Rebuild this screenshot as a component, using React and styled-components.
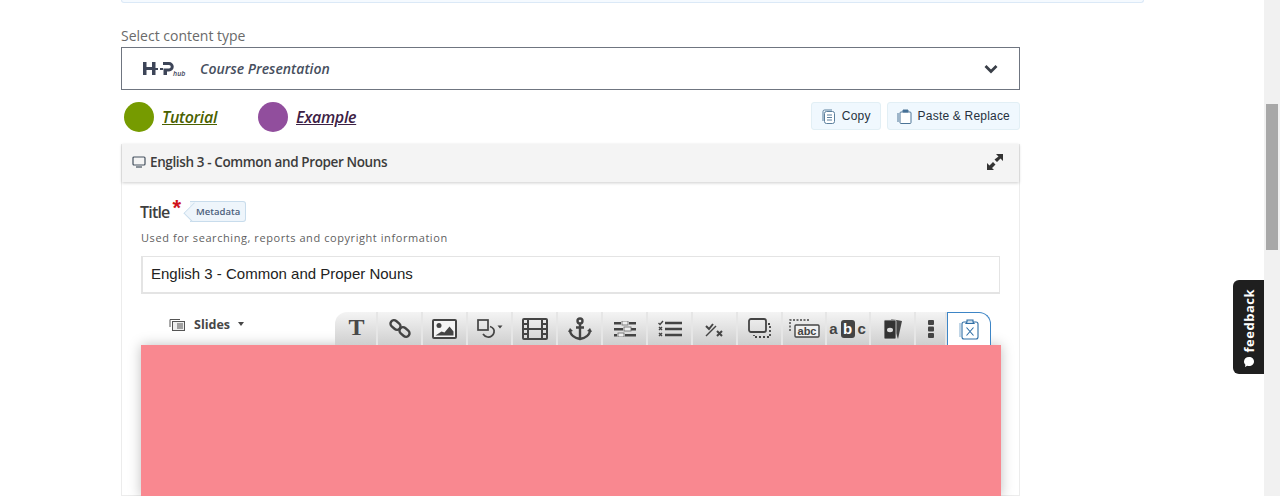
import React from "react";
import styled, { createGlobalStyle } from "styled-components";

const Global = createGlobalStyle`
  html, body { margin: 0; padding: 0; height: 496px; overflow: hidden; background: #fff; }
  * { box-sizing: border-box; }
`;

const Page = styled.div`
  position: relative;
  display: flex;
  width: 1280px;
  height: 496px;
  overflow: hidden;
  font-family: "Open Sans", sans-serif;
`;

const Main = styled.main`
  flex: 1;
  padding-left: 121px;
`;

const Notice = styled.div`
  width: 1023px;
  height: 3px;
  background: #f5faff;
  border: 1px solid #dbe9f7;
  border-top: 0;
  border-radius: 0 0 5px 5px;
`;

const Form = styled.div`
  width: 899px;
`;

const FieldLabel = styled.div`
  margin-top: 23px;
  height: 21px;
  font-size: 14px;
  line-height: 20px;
  color: #6a6a6a;
`;

const Select = styled.div`
  display: flex;
  align-items: center;
  height: 43px;
  padding: 0 21px;
  border: 1px solid #6f7580;
  background: #fff;
`;

const HubLogo = styled.span`
  display: flex;
  align-items: center;
  width: 57px;
  height: 18px;
`;

const SelectName = styled.span`
  flex: 1;
  font-size: 14px;
  font-weight: 600;
  font-style: italic;
  color: #474f5e;
`;

const ActionRow = styled.div`
  display: flex;
  align-items: center;
  height: 54px;
  padding-left: 3px;
`;

const Dot = styled.span`
  width: 30px;
  height: 30px;
  border-radius: 50%;
  background: ${(p) => p.$color};
`;

const HelpLink = styled.a`
  margin: 0 41px 0 8px;
  font-size: 16px;
  font-weight: 600;
  font-style: italic;
  letter-spacing: -0.3px;
  text-decoration: underline;
  color: ${(p) => p.$color};
`;

const Spacer = styled.span`
  flex: 1;
`;

const ClipButton = styled.button`
  display: flex;
  align-items: center;
  gap: 6px;
  height: 28px;
  margin: 0 0 2px 6px;
  padding: 0 9px;
  border: 1px solid #e2eff5;
  border-radius: 3px;
  background: #f0f8fe;
  font-family: "Liberation Sans", sans-serif;
  font-size: 12px;
  letter-spacing: 0.2px;
  color: #26313d;
`;

const Panel = styled.section`
  height: 352px;
  border: 1px solid #ececec;
  border-top: 0;
`;

const PanelHead = styled.header`
  display: flex;
  align-items: center;
  height: 38px;
  padding: 0 15px 2px 10px;
  background: #f4f4f4;
  box-shadow: 0 1px 3px rgba(0, 0, 0, 0.2);
  font-size: 13.500px;
  font-weight: 600;
  letter-spacing: -0.38px;
  color: #3c3c3c;
  svg:first-child { margin-right: 4px; }
  span { flex: 1; }
`;

const PanelBody = styled.div`
  padding: 16px 18px 0 19px;
`;

const TitleRow = styled.div`
  display: flex;
  align-items: center;
  height: 27px;
`;

const TitleLabel = styled.span`
  margin-left: -1px;
  font-size: 16px;
  font-weight: 600;
  letter-spacing: -0.8px;
  color: #3f3f3f;
`;

const Star = styled.span`
  margin: -7px 4px 0 3px;
  font-family: "Liberation Sans", sans-serif;
  font-size: 22px;
  font-weight: 700;
  line-height: 22px;
  color: #d0141b;
`;

const MetaTag = styled.span`
  position: relative;
  height: 21px;
  margin-left: 5px;
  padding: 0 5px 0 6px;
  border: 1px solid #c8dcec;
  border-left: 0;
  border-radius: 0 3px 3px 0;
  background: #eef5fb;
  font-size: 9.500px;
  font-weight: 600;
  line-height: 19px;
  color: #4c5f7c;
  &::before {
    content: "";
    position: absolute;
    left: -5px;
    top: 2px;
    width: 15px;
    height: 15px;
    transform: rotate(45deg) scale(0.72, 0.95);
    border-left: 1px solid #c8dcec;
    border-bottom: 1px solid #c8dcec;
    background: #eef5fb;
    z-index: 0;
  }
  b { position: relative; font-weight: 600; z-index: 1; }
`;

const Hint = styled.div`
  height: 18px;
  margin-top: 4px;
  font-size: 11px;
  line-height: 18px;
  letter-spacing: 0.57px;
  color: #5f5f5f;
`;

const TitleInput = styled.div`
  height: 38px;
  margin: 9px 1px 0 0;
  padding: 0 8px;
  border: 2px solid #e4e4e4;
  border-width: 1px 1px 2px 2px;
  background: #fff;
  font-family: "Liberation Sans", sans-serif;
  font-size: 15px;
  line-height: 33px;
  color: #222;
`;

const EditorBar = styled.div`
  display: flex;
  align-items: flex-end;
  justify-content: space-between;
  height: 51px;
  padding: 0 10px 0 28px;
`;

const SlidesMenu = styled.div`
  display: flex;
  align-items: center;
  align-self: flex-start;
  gap: 9px;
  height: 20px;
  margin-top: 20px;
  font-size: 12.500px;
  font-weight: 700;
  color: #474747;
  i {
    margin-left: -1px;
    border: 3.500px solid transparent;
    border-top: 4px solid #474747;
    border-bottom: 0;
  }
`;

const Tools = styled.div`
  display: flex;
  height: 33px;
`;

const Tool = styled.div`
  display: flex;
  align-items: center;
  justify-content: center;
  width: ${(p) => p.$w || 45}px;
  height: 33px;
  background: linear-gradient(#f4f4f4, #cfcfcf);
  border-right: 2px solid #e6e6e6;
  color: #444;
  &:first-child { border-radius: 12px 0 0 0; }
`;

const ActiveTool = styled(Tool)`
  width: 44px;
  background: #fff;
  border: 1px solid #3d85c6;
  border-bottom: 0;
  border-radius: 0 12px 0 0;
`;

const SerifT = styled.span`
  margin: -3px 0 0 2px;
  font-family: "Liberation Serif", serif;
  font-size: 24px;
  font-weight: 700;
  color: #484848;
`;

const AbcWord = styled.span`
  display: flex;
  align-items: center;
  font-family: "Liberation Sans", sans-serif;
  font-size: 15px;
  font-weight: 700;
  letter-spacing: 1px;
  color: #444;
  b {
    display: block;
    width: 14px;
    height: 18px;
    margin: 0 3px 0 2px;
    border-radius: 3px;
    background: #444;
    color: #fff;
    text-align: center;
    line-height: 18px;
    letter-spacing: 0;
  }
`;

const Slide = styled.div`
  height: 152px;
  background: #f98890;
  box-shadow: 0 0 12px rgba(0, 0, 0, 0.25);
`;

const Scrollbar = styled.aside`
  width: 16px;
  height: 496px;
  padding: 104px 2px 0;
  background: #f1f1f1;
`;

const Thumb = styled.div`
  height: 146px;
  background: #a8a8a8;
`;

const Feedback = styled.a`
  position: absolute;
  right: 16px;
  top: 280px;
  display: flex;
  align-items: center;
  justify-content: flex-end;
  gap: 4px;
  width: 31px;
  height: 94px;
  padding-bottom: 6px;
  border-radius: 6px 0 0 6px;
  background: #1f1f1f;
  color: #fff;
  writing-mode: vertical-rl;
  font-size: 13px;
  font-weight: 700;
  letter-spacing: 0.5px;
  span { display: block; transform: rotate(180deg); }
  svg { order: 1; }
`;

const icon = { fill: "none", stroke: "currentColor", strokeWidth: 2 };

const tools = [
  { w: 43, el: <SerifT>T</SerifT> },
  {
    w: 45,
    el: (
      <svg width="22" height="21" viewBox="0 0 22 21" {...icon} strokeWidth="2.400">
        <rect x="1" y="3.500" width="11" height="7" rx="3.500" transform="rotate(40 6.500 7)" />
        <rect x="10" y="10.500" width="11" height="7" rx="3.500" transform="rotate(40 15.500 14)" />
      </svg>
    ),
  },
  {
    w: 45,
    el: (
      <svg width="25" height="20" viewBox="0 0 25 20">
        <rect x="1" y="1" width="23" height="18" rx="1" fill="#f4f4f4" stroke="#444" strokeWidth="2" />
        <circle cx="7" cy="6.500" r="2.500" fill="#444" />
        <path d="M3.500 16.500l6-4 3 1 5-6 4 5v4z" fill="#444" />
      </svg>
    ),
  },
  {
    w: 45,
    el: (
      <svg width="26" height="20" viewBox="0 0 26 20" {...icon} strokeWidth="1.700">
        <rect x="1" y="1" width="10" height="10" />
        <path d="M13 7.500c3 1 4.500 3.500 4 6-.6 3-3.500 5-6.500 4.500-2-.3-3.500-1.500-4.500-3" />
        <path d="M20.500 6.500h5l-2.500 3z" fill="currentColor" stroke="none" />
      </svg>
    ),
  },
  {
    w: 45,
    el: (
      <svg width="26" height="22" viewBox="0 0 26 22" {...icon}>
        <rect x="1" y="1" width="24" height="20" rx="1" />
        <path d="M6 1v20M20 1v20M6 11h14M1 6h5M1 11h5M1 16h5M20 6h5M20 11h5M20 16h5" />
      </svg>
    ),
  },
  {
    w: 45,
    el: (
      <svg width="24" height="24" viewBox="0 0 24 24" {...icon} strokeWidth="2.400">
        <circle cx="12" cy="4" r="2.500" />
        <path d="M12 7v15M8 10.500h8M2 13c0 5 5 8 10 9 5-1 10-4 10-9" />
        <path d="M0 15l2-4 3 3zM24 15l-2-4-3 3z" fill="currentColor" stroke="none" />
      </svg>
    ),
  },
  {
    w: 45,
    el: (
      <svg width="22" height="16" viewBox="0 0 22 16" fill="#444">
        <rect x="0" y="1" width="7" height="2.500" />
        <rect x="15" y="1" width="7" height="2.500" />
        <rect x="8" y="0" width="6" height="4" fill="#eee" stroke="#666" strokeWidth="0.800" />
        <rect x="0" y="7" width="9" height="2.500" />
        <rect x="17" y="7" width="5" height="2.500" />
        <rect x="10" y="6" width="7" height="4" fill="#eee" stroke="#666" strokeWidth="0.800" />
        <rect x="0" y="13" width="3" height="2.500" />
        <rect x="11" y="13" width="11" height="2.500" />
        <rect x="4" y="12" width="6" height="4" fill="#eee" stroke="#666" strokeWidth="0.800" />
      </svg>
    ),
  },
  {
    w: 45,
    el: (
      <svg width="24" height="18" viewBox="0 0 24 18" fill="none" stroke="#444">
        <path d="M0.500 3l1.500 1.500L5 1" strokeWidth="1.400" />
        <path d="M1 7l3 3M4 7l-3 3M1 13l3 3M4 13l-3 3" strokeWidth="1.400" />
        <path d="M7 3h17M7 9h17M7 15h17" strokeWidth="2.600" />
      </svg>
    ),
  },
  {
    w: 45,
    el: (
      <svg width="20" height="16" viewBox="0 0 20 16" fill="none" stroke="#444">
        <path d="M1 5l3 3 4-5" strokeWidth="2" />
        <path d="M1 15L11 5" strokeWidth="1.400" />
        <path d="M12 10l5 5M17 10l-5 5" strokeWidth="2" />
      </svg>
    ),
  },
  {
    w: 45,
    el: (
      <svg width="24" height="21" viewBox="0 0 24 21" fill="none" stroke="#444">
        <rect x="1" y="1" width="17" height="13" rx="2" strokeWidth="1.800" />
        <path d="M20 6h2v13H6v-2" strokeWidth="1.800" strokeDasharray="2 2" />
      </svg>
    ),
  },
  {
    w: 44,
    el: (
      <svg width="31" height="19" viewBox="0 0 31 19">
        <path d="M1 12V1h20" fill="none" stroke="#444" strokeWidth="1.400" strokeDasharray="2 1.500" />
        <rect x="6" y="6" width="24" height="12" rx="1" fill="#f0f0f0" stroke="#444" strokeWidth="1.400" />
        <text x="18" y="16" textAnchor="middle" fontFamily="Liberation Sans" fontSize="11" fontWeight="700" fill="#444">
          abc
        </text>
      </svg>
    ),
  },
  { w: 44, el: <AbcWord>a<b>b</b>c</AbcWord> },
  {
    w: 45,
    el: (
      <svg width="20" height="22" viewBox="0 0 20 22">
        <path d="M8 1l11 2-4 18z" fill="#444" />
        <rect x="1" y="2" width="12" height="19" rx="1" fill="#333" stroke="#ddd" strokeWidth="0.800" />
        <ellipse cx="7" cy="12" rx="3" ry="2.200" fill="#ddd" />
      </svg>
    ),
  },
  {
    w: 31,
    el: (
      <svg width="6" height="18" viewBox="0 0 6 18" fill="#444">
        <rect y="0" width="6" height="5" rx="1" />
        <rect y="6.500" width="6" height="5" rx="1" />
        <rect y="13" width="6" height="5" rx="1" />
      </svg>
    ),
  },
];

const App = () => (
  <Page>
    <Global />
    <Main>
      <Notice />
      <Form>
        <FieldLabel>Select content type</FieldLabel>
        <Select>
          <HubLogo>
            <svg width="44" height="16" viewBox="0 0 44 16" fill="#3d4558">
              <path d="M0 1h3.500v5H9V1h3.500v13H9V9H3.500v5H0z" />
              <path d="M12 7h3v2h-3zM17 7h3v2h-3z" />
              <path d="M20 1h6a4.500 4.500 0 0 1 0 9.500h-2V14h-3.500V7.500H26a1.500 1.500 0 0 0 0-3.500h-6z" />
              <text x="30" y="14.500" fontFamily="Open Sans" fontSize="7" fontWeight="600" fontStyle="italic">hub</text>
            </svg>
          </HubLogo>
          <SelectName>Course Presentation</SelectName>
          <svg width="14" height="10" viewBox="0 0 14 10" fill="none" stroke="#3a3f48" strokeWidth="2.800">
            <path d="M1.500 2l5.500 5.500L12.500 2" />
          </svg>
        </Select>
        <ActionRow>
          <Dot $color="#769b00" />
          <HelpLink $color="#4a6100">Tutorial</HelpLink>
          <Dot $color="#914e9d" />
          <HelpLink $color="#3d2145">Example</HelpLink>
          <Spacer />
          <ClipButton>
            <svg width="15" height="15" viewBox="0 0 15 15" fill="none" stroke="#5b7f9c">
              <path d="M2 12V2.500A1.500 1.500 0 0 1 3.500 1H11" />
              <rect x="3.500" y="2.500" width="10" height="12" rx="2" fill="#fff" />
              <path d="M6 6h5M6 8.500h5M6 11h5" />
            </svg>
            Copy
          </ClipButton>
          <ClipButton>
            <svg width="15" height="15" viewBox="0 0 15 15" fill="none" stroke="#4c7497">
              <path d="M1 13V4" />
              <rect x="3" y="3" width="11" height="11.500" rx="1" fill="#fff" />
              <path d="M6 3V1h5v2z" fill="#3d6d96" />
            </svg>
            Paste &amp; Replace
          </ClipButton>
        </ActionRow>
        <Panel>
          <PanelHead>
            <svg width="14" height="12" viewBox="0 0 14 12" fill="none" stroke="#44505e" strokeWidth="1.200">
              <rect x="1" y="1" width="12" height="8" rx="1" />
              <path d="M4 11h6" />
            </svg>
            <span>English 3 - Common and Proper Nouns</span>
            <svg width="18" height="18" viewBox="0 0 18 18" fill="#333">
              <path d="M10 1h7v7l-2.500-2.500-3.500 3.500-2.500-2.500L12.500 3.500zM1 17v-7l2.500 2.500L7 9l2.500 2.500L6 15l2 2z" />
            </svg>
          </PanelHead>
          <PanelBody>
            <TitleRow>
              <TitleLabel>Title</TitleLabel>
              <Star>*</Star>
              <MetaTag><b>Metadata</b></MetaTag>
            </TitleRow>
            <Hint>Used for searching, reports and copyright information</Hint>
            <TitleInput>English 3 - Common and Proper Nouns</TitleInput>
            <EditorBar>
              <SlidesMenu>
                <svg width="16" height="13" viewBox="0 0 16 13" fill="none" stroke="#555">
                  <path d="M1 9V1.500h10" />
                  <rect x="3.500" y="3.500" width="12" height="9" fill="#eee" />
                  <path d="M8 6h6M8 8h6M8 10h6" />
                </svg>
                Slides
                <i />
              </SlidesMenu>
              <Tools>
                {tools.map((t, i) => (
                  <Tool key={i} $w={t.w}>{t.el}</Tool>
                ))}
                <ActiveTool>
                  <svg width="20" height="21" viewBox="0 0 20 21" fill="none" stroke="#2f6ea5" strokeWidth="1.100">
                    <path d="M1 18V4" stroke="#8fb4d3" />
                    <rect x="3" y="3" width="16" height="17" rx="2" />
                    <path d="M8 3V1h6v2l1 1.500H7z" fill="#cfe0ee" />
                    <path d="M7.500 8.500l7 8M14.500 8.500l-7 8" />
                  </svg>
                </ActiveTool>
              </Tools>
            </EditorBar>
            <Slide />
          </PanelBody>
        </Panel>
      </Form>
    </Main>
    <Feedback>
      <span>feedback</span>
      <svg width="12" height="12" viewBox="0 0 12 12" fill="#fff">
        <path d="M6 1c3 0 5 2 5 4.500S9 10 6 10c-.6 0-1.200-.1-1.700-.2L2 11l.4-2.300C1.500 7.900 1 6.800 1 5.500 1 3 3 1 6 1z" />
      </svg>
    </Feedback>
    <Scrollbar>
      <Thumb />
    </Scrollbar>
  </Page>
);

export default App;
